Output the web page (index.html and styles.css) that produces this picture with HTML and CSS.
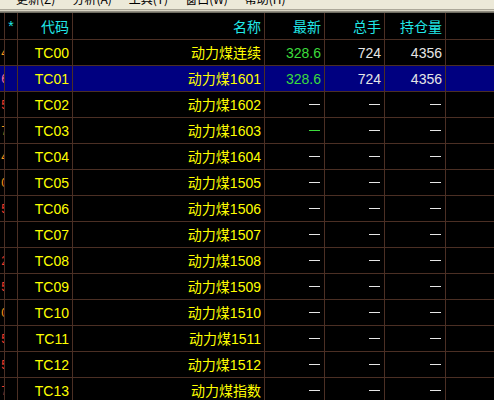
FILE: index.html
```html
<!DOCTYPE html>
<html lang="zh-CN">
<head>
<meta charset="utf-8">
<title>动力煤</title>
<link rel="stylesheet" href="styles.css">
</head>
<body>
<div class="menubar">
  <span class="mi">更新(<u>Z</u>)</span>
  <span class="mi">分析(<u>A</u>)</span>
  <span class="mi">工具(<u>T</u>)</span>
  <span class="mi">窗口(<u>W</u>)</span>
  <span class="mi">帮助(<u>H</u>)</span>
</div>
<div class="band"></div>
<div class="grid">
  <div class="row head">
    <div class="c c0"></div>
    <div class="c c1 center">*</div>
    <div class="c">代码</div>
    <div class="c">名称</div>
    <div class="c">最新</div>
    <div class="c">总手</div>
    <div class="c">持仓量</div>
    <div class="c last"></div>
  </div>

  <div class="row">
    <div class="c c0 orange"><span class="clip">4</span></div><div class="c c1"></div>
    <div class="c code">TC00</div><div class="c name">动力煤连续</div>
    <div class="c green">328.6</div><div class="c white">724</div><div class="c white">4356</div><div class="c last"></div>
  </div>
  <div class="row sel">
    <div class="c c0 pink"><span class="clip">6</span></div><div class="c c1"></div>
    <div class="c code">TC01</div><div class="c name">动力煤1601</div>
    <div class="c green">328.6</div><div class="c white">724</div><div class="c white">4356</div><div class="c last"></div>
  </div>
  <div class="row">
    <div class="c c0 red"><span class="clip">5</span></div><div class="c c1"></div>
    <div class="c code">TC02</div><div class="c name">动力煤1602</div>
    <div class="c white"><span class="dash"></span></div><div class="c white"><span class="dash"></span></div><div class="c white"><span class="dash"></span></div><div class="c last"></div>
  </div>
  <div class="row">
    <div class="c c0 orange"><span class="clip">7</span></div><div class="c c1"></div>
    <div class="c code">TC03</div><div class="c name">动力煤1603</div>
    <div class="c green"><span class="dash"></span></div><div class="c white"><span class="dash"></span></div><div class="c white"><span class="dash"></span></div><div class="c last"></div>
  </div>
  <div class="row">
    <div class="c c0 orange"><span class="clip">4</span></div><div class="c c1"></div>
    <div class="c code">TC04</div><div class="c name">动力煤1604</div>
    <div class="c white"><span class="dash"></span></div><div class="c white"><span class="dash"></span></div><div class="c white"><span class="dash"></span></div><div class="c last"></div>
  </div>
  <div class="row">
    <div class="c c0 orange"><span class="clip">0</span></div><div class="c c1"></div>
    <div class="c code">TC05</div><div class="c name">动力煤1505</div>
    <div class="c white"><span class="dash"></span></div><div class="c white"><span class="dash"></span></div><div class="c white"><span class="dash"></span></div><div class="c last"></div>
  </div>
  <div class="row">
    <div class="c c0 red"><span class="clip">5</span></div><div class="c c1"></div>
    <div class="c code">TC06</div><div class="c name">动力煤1506</div>
    <div class="c white"><span class="dash"></span></div><div class="c white"><span class="dash"></span></div><div class="c white"><span class="dash"></span></div><div class="c last"></div>
  </div>
  <div class="row">
    <div class="c c0"></div><div class="c c1"></div>
    <div class="c code">TC07</div><div class="c name">动力煤1507</div>
    <div class="c white"><span class="dash"></span></div><div class="c white"><span class="dash"></span></div><div class="c white"><span class="dash"></span></div><div class="c last"></div>
  </div>
  <div class="row">
    <div class="c c0 red"><span class="clip">2</span></div><div class="c c1"></div>
    <div class="c code">TC08</div><div class="c name">动力煤1508</div>
    <div class="c white"><span class="dash"></span></div><div class="c white"><span class="dash"></span></div><div class="c white"><span class="dash"></span></div><div class="c last"></div>
  </div>
  <div class="row">
    <div class="c c0 red"><span class="clip">5</span></div><div class="c c1"></div>
    <div class="c code">TC09</div><div class="c name">动力煤1509</div>
    <div class="c white"><span class="dash"></span></div><div class="c white"><span class="dash"></span></div><div class="c white"><span class="dash"></span></div><div class="c last"></div>
  </div>
  <div class="row">
    <div class="c c0 orange"><span class="clip">0</span></div><div class="c c1"></div>
    <div class="c code">TC10</div><div class="c name">动力煤1510</div>
    <div class="c white"><span class="dash"></span></div><div class="c white"><span class="dash"></span></div><div class="c white"><span class="dash"></span></div><div class="c last"></div>
  </div>
  <div class="row">
    <div class="c c0 red"><span class="clip">5</span></div><div class="c c1"></div>
    <div class="c code">TC11</div><div class="c name">动力煤1511</div>
    <div class="c white"><span class="dash"></span></div><div class="c white"><span class="dash"></span></div><div class="c white"><span class="dash"></span></div><div class="c last"></div>
  </div>
  <div class="row">
    <div class="c c0 red"><span class="clip">5</span></div><div class="c c1"></div>
    <div class="c code">TC12</div><div class="c name">动力煤1512</div>
    <div class="c white"><span class="dash"></span></div><div class="c white"><span class="dash"></span></div><div class="c white"><span class="dash"></span></div><div class="c last"></div>
  </div>
  <div class="row">
    <div class="c c0 red"><span class="clip">7</span></div><div class="c c1"></div>
    <div class="c code">TC13</div><div class="c name">动力煤指数</div>
    <div class="c white"><span class="dash"></span></div><div class="c white"><span class="dash"></span></div><div class="c white"><span class="dash"></span></div><div class="c last"></div>
  </div>
</div>
</body>
</html>
```

FILE: styles.css
```css
html, body {
  margin: 0;
  padding: 0;
  background: #000;
  overflow: hidden;
}
body {
  width: 494px;
  height: 400px;
  font-family: "Liberation Sans", "Noto Sans CJK SC", sans-serif;
  font-size: 14px;
}
.menubar {
  height: 9px;
  background: #ece9d8;
  overflow: hidden;
  display: flex;
  gap: 17px;
  padding-left: 16px;
  font-family: "Noto Sans CJK SC", sans-serif;
  font-size: 12px;
  color: #000;
}
.mi {
  display: block;
  line-height: 16px;
  margin-top: -9px;
  white-space: nowrap;
}
.mi u {
  text-decoration: none;
}
.band {
  height: 4px;
  background: linear-gradient(#aca899 0 1px, #d8d4c4 1px 2px, #908c80 2px 3px, #6f6d62 3px 4px);
}
.grid {
  display: flex;
  flex-direction: column;
}
.row {
  display: grid;
  grid-template-columns: 5px 13px 55px 192px 60px 60px 61px 1fr;
  height: 26px;
  border-bottom: 1px solid #4b2f24;
  box-sizing: border-box;
}
.row.head {
  height: 27px;
  color: #20e8e8;
}
.row.sel {
  background: #000080;
}
.c {
  display: flex;
  align-items: center;
  justify-content: flex-end;
  padding-right: 3px;
  border-right: 1px solid #4b2f24;
  box-sizing: border-box;
  white-space: nowrap;
  overflow: hidden;
  min-width: 0;
}
.c.c0 {
  padding-right: 0;
  font-size: 12px;
}
.clip {
  margin-right: -4px;
}
.c.center {
  justify-content: center;
  padding-right: 0;
}
.c.last {
  border-right: none;
}
.name {
  padding-bottom: 2px;
}
.code, .name {
  color: #ffff00;
}
.green {
  color: #3cdc3c;
}
.white {
  color: #e6e6e6;
}
.red {
  color: #ff3a2a;
}
.orange {
  color: #ff9a1a;
}
.pink {
  color: #ff70a0;
}
.dash {
  display: inline-block;
  width: 11px;
  height: 1px;
  margin-right: 1px;
  background: currentColor;
}
```
